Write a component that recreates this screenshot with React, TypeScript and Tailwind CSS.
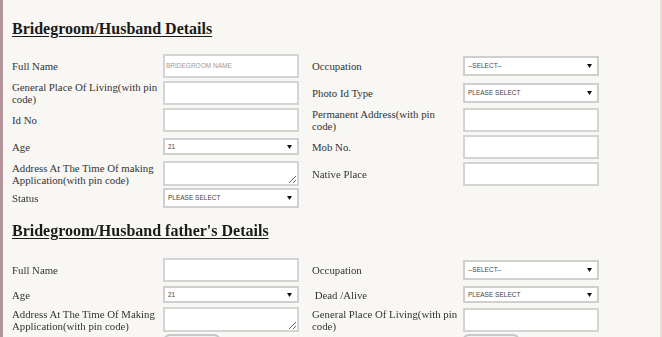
import React from "react";

const serif = { fontFamily: '"Liberation Serif", "Times New Roman", serif' };

function Arrow() {
  return (
    <svg className="absolute right-[5px] top-1/2 -translate-y-1/2" width="5" height="4" viewBox="0 0 5 4">
      <path d="M0 0 L5 0 L2.5 4 Z" fill="#111" />
    </svg>
  );
}

function TextBox({ placeholder }: { placeholder?: string }) {
  return (
    <input
      type="text"
      placeholder={placeholder}
      className="block w-[136px] h-[24px] bg-white border-2 border-[#d4d4d4] px-[1px] text-[6.5px] placeholder:text-[#9a9a9a] outline-none"
      style={{ fontFamily: '"Liberation Sans", Arial, sans-serif' }}
    />
  );
}

function Area() {
  return (
    <textarea className="block w-[136px] h-[25px] bg-white border-2 border-[#d4d4d4] outline-none resize" />
  );
}

function Select({ value, h = "h-[20px]" }: { value: string; h?: string }) {
  return (
    <div
      className={`relative w-[136px] ${h} bg-white border-2 border-[#cfcfcf] flex items-center pl-[3px] text-[6.5px] text-[#444]`}
      style={{ fontFamily: '"Liberation Sans", Arial, sans-serif' }}
    >
      {value}
      <Arrow />
    </div>
  );
}

function Label({ children }: { children: React.ReactNode }) {
  return <div className="w-[148px] text-[10.8px] leading-[12px] text-[#333]">{children}</div>;
}

function Row({ h, cells }: { h: string; cells: React.ReactNode[] }) {
  return (
    <div className={`grid grid-cols-[151px_149px_151px_136px] items-center ${h}`}>
      {cells.map((c, i) => (
        <div key={i}>{c}</div>
      ))}
    </div>
  );
}

function Heading({ children }: { children: React.ReactNode }) {
  return (
    <h2 className="text-[16px] leading-[20px] font-bold underline underline-offset-[2px] text-[#1a1a1a]">
      {children}
    </h2>
  );
}

export default function App() {
  return (
    <div className="w-[662px] h-[337px] overflow-hidden bg-[#f8f7f4] flex" style={serif}>
      <div className="w-[3px] bg-[#b4959b] shrink-0" />
      <div className="flex-1 pl-[9px] pt-[19px]">
        <Heading>Bridegroom/Husband Details</Heading>
        <div className="mt-[14px] flex flex-col gap-y-[2px]">
          <Row
            h="h-[25px]"
            cells={[
              <Label>Full Name</Label>,
              <TextBox placeholder="BRIDEGROOM NAME" />,
              <Label>Occupation</Label>,
              <Select value="--SELECT--" />,
            ]}
          />
          <Row
            h="h-[25px]"
            cells={[
              <Label>General Place Of Living(with pin code)</Label>,
              <TextBox />,
              <Label>Photo Id Type</Label>,
              <Select value="PLEASE SELECT" />,
            ]}
          />
          <Row
            h="h-[25px]"
            cells={[
              <Label>Id No</Label>,
              <TextBox />,
              <Label>Permanent Address(with pin code)</Label>,
              <TextBox />,
            ]}
          />
          <Row
            h="h-[25px]"
            cells={[
              <Label>Age</Label>,
              <Select value="21" h="h-[17px]" />,
              <Label>Mob No.</Label>,
              <TextBox />,
            ]}
          />
          <Row
            h="h-[25px]"
            cells={[
              <Label>Address At The Time Of making Application(with pin code)</Label>,
              <Area />,
              <Label>Native Place</Label>,
              <TextBox />,
            ]}
          />
          <Row
            h="h-[20px]"
            cells={[<Label>Status</Label>, <Select value="PLEASE SELECT" />, null, null]}
          />
        </div>

        <div className="mt-[13px]">
          <Heading>Bridegroom/Husband father's Details</Heading>
        </div>
        <div className="mt-[16px] flex flex-col gap-y-[2px]">
          <Row
            h="h-[25px]"
            cells={[
              <Label>Full Name</Label>,
              <TextBox />,
              <Label>Occupation</Label>,
              <Select value="--SELECT--" />,
            ]}
          />
          <Row
            h="h-[21px]"
            cells={[
              <Label>Age</Label>,
              <Select value="21" h="h-[17px]" />,
              <Label>&nbsp;Dead /Alive</Label>,
              <Select value="PLEASE SELECT" h="h-[17px]" />,
            ]}
          />
          <Row
            h="h-[25px]"
            cells={[
              <Label>Address At The Time Of Making Application(with pin code)</Label>,
              <Area />,
              <Label>General Place Of Living(with pin code)</Label>,
              <TextBox />,
            ]}
          />
          <Row
            h="h-[20px]"
            cells={[
              null,
              <button className="block w-[58px] h-[20px] rounded-[7px] border-2 border-[#c8c8c8] bg-[#f2f2f2]" />,
              null,
              <button className="block w-[58px] h-[20px] rounded-[7px] border-2 border-[#c8c8c8] bg-[#f2f2f2] -ml-[1px]" />,
            ]}
          />
        </div>
      </div>
      <div className="w-[2px] bg-[#f1dcdc] shrink-0" />
    </div>
  );
}
